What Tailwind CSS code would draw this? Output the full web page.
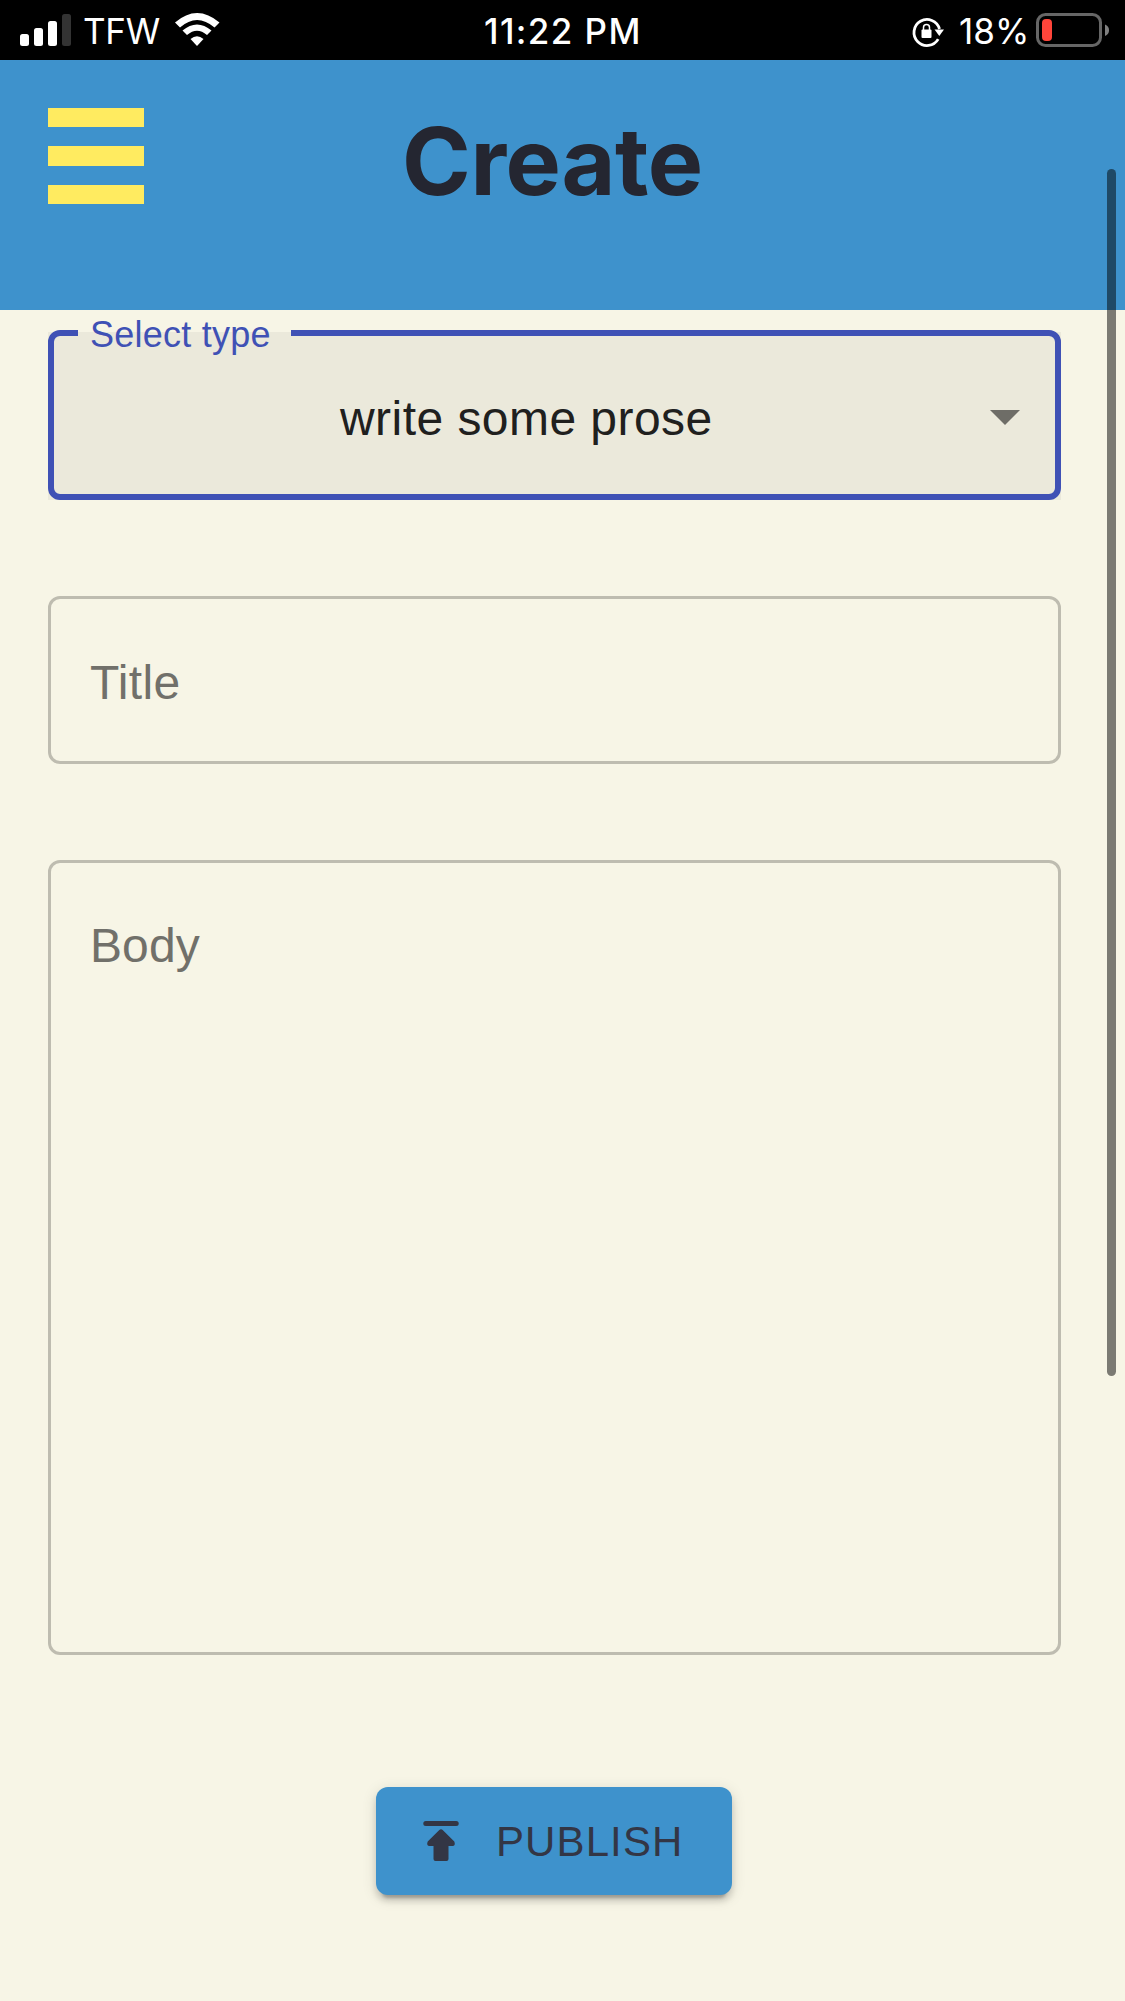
<!DOCTYPE html>
<html lang="en">
<head>
<meta charset="utf-8">
<title>Create</title>
<script src="https://cdn.jsdelivr.net/npm/@tailwindcss/browser@4"></script>
</head>
<body class="relative h-[2001px] w-[1125px] overflow-hidden bg-[#f7f5e6] font-['Liberation_Sans',Arial,sans-serif]">
  <!-- Status bar -->
  <div class="grid h-[60px] grid-cols-3 items-center bg-black font-['Inter',sans-serif] text-[35px] leading-none whitespace-nowrap text-white">
    <div class="flex h-[60px] items-center pl-5">
      <svg class="h-[60px] w-[51px] shrink-0" viewBox="20 0 51 60" fill="#fff">
        <rect x="20" y="34" width="9" height="12" rx="2.5"/><rect x="34" y="28" width="9" height="18" rx="2.5"/><rect x="48" y="21" width="9" height="25" rx="2.5"/><rect x="62" y="14" width="9" height="32" rx="2.5" fill="#333"/>
      </svg>
      <span class="ml-[12px] w-[91px] pt-[3px] font-normal tracking-[-0.3px]">TFW</span>
      <svg class="h-[60px] w-[46px] shrink-0" viewBox="174 0 46 60" fill="#fff">
        <path d="M175 22.5Q197 3.500 219.500 22.500L214.500 27.500Q197 12.500 180 27.500Z"/>
        <path d="M182.500 30.500Q197 18.500 211.500 30.500L207 35Q197 26.500 187 35Z"/>
        <path d="M190.500 39Q197 33.500 203.500 39L197 46Z"/>
      </svg>
    </div>
    <div class="pt-[3px] pl-[109px] font-medium tracking-[1.4px]">11:22 PM</div>
    <div class="flex h-[60px] items-center pl-[160px]">
      <svg class="h-[60px] w-[36px] shrink-0" viewBox="910 0 36 60">
        <path d="M938.200 39.100A13 13 0 1 1 939.500 29" fill="none" stroke="#fff" stroke-width="2.800"/>
        <path d="M934.500 29.500H944L939.300 36Z" fill="#fff"/>
        <rect x="921.500" y="29.500" width="10" height="8.500" rx="1" fill="#fff"/>
        <path d="M923.500 30V27.500a3 3 0 0 1 6 0V30" fill="none" stroke="#fff" stroke-width="1.500"/>
      </svg>
      <span class="ml-[13px] w-[76px] pt-[3px] font-normal tracking-[0px]">18%</span>
      <svg class="h-[60px] w-[75px] shrink-0" viewBox="1035 0 75 60">
        <rect x="1037.500" y="14.500" width="63" height="31" rx="8" fill="none" stroke="#666" stroke-width="3"/>
        <rect x="1042" y="19" width="10" height="22" rx="4" fill="#ff453a"/>
        <path d="M1105 24.500Q1109 26 1109 30.300Q1109 34.500 1105 36Z" fill="#808080"/>
      </svg>
    </div>
  </div>

  <!-- App header -->
  <header class="flex h-[250px] items-start bg-[#3e92cc] pl-12">
    <button class="mt-12 flex h-24 w-24 flex-col justify-between" aria-label="Menu">
      <span class="h-[19px] w-full bg-[#ffeb60]"></span><span class="h-5 w-full bg-[#ffeb60]"></span><span class="h-[19px] w-full bg-[#ffeb60]"></span>
    </button>
    <h1 class="mt-[43px] ml-[258px] font-['Inter',sans-serif] text-[93px] leading-[116px] font-bold tracking-[-0.4px] whitespace-nowrap text-[#242631]">Create</h1>
  </header>

  <!-- Form -->
  <main class="flex flex-col pl-12">
    <div class="relative mt-[22px] flex h-[168px] w-[1013px] items-center bg-[#ebe9db]">
      <fieldset class="absolute inset-x-0 -top-[2px] h-[170px] rounded-[12px] border-[6px] border-[#3f51b5]"></fieldset>
      <span class="absolute -top-[2px] left-[30px] h-[2px] w-[213px] bg-[#f7f5e6]"></span>
      <span class="absolute top-0 left-[30px] h-[4px] w-[213px] bg-[#ebe9db]"></span>
      <label class="absolute -top-[18px] left-[42px] text-[36px] leading-[42px] tracking-[0.25px] whitespace-nowrap text-[#3f51b5]">Select type</label>
      <span class="ml-[292px] w-[650px] pt-[5px] text-[48px] leading-[56px] tracking-[0.45px] whitespace-nowrap text-[#20201e]">write some prose</span>
      <svg class="mt-[2px] h-[15px] w-[30px] shrink-0" viewBox="0 0 30 15"><path d="M0 0H30L15 15Z" fill="#6e6d67"/></svg>
    </div>
    <div class="mt-24 flex h-[168px] w-[1013px] items-center rounded-[12px] border-[3px] border-[#bebcb0] pt-[5px] pl-[39px] text-[48px] leading-[56px] tracking-[0.3px] text-[#71706a]">Title</div>
    <div class="mt-24 h-[795px] w-[1013px] rounded-[12px] border-[3px] border-[#bebcb0] pt-[55px] pl-[39px] text-[48px] leading-[56px] tracking-[0.1px] text-[#71706a]">Body</div>
    <button class="mt-[132px] ml-[328px] flex h-[108px] w-[356px] items-center rounded-[12px] bg-[#3e92cc] pl-[47px] text-[42px] leading-[50px] tracking-[1.1px] text-[#333645] shadow-[0_9px_3px_-6px_rgba(0,0,0,0.2),0_6px_6px_0_rgba(0,0,0,0.14),0_3px_15px_0_rgba(0,0,0,0.12)]">
      <svg class="h-[42px] w-9 shrink-0" viewBox="0 0 36 42" fill="#333645">
        <rect x="0.300" y="1" width="35.400" height="5" rx="2.500"/>
        <path d="M16.300 10Q18 8.500 19.700 10L31.300 21.600Q32.800 25.500 30 26H25.500V39Q25.500 41 23.500 41H12.500Q10.500 41 10.500 39V26H6Q3.200 25.500 4.700 21.600Z"/>
      </svg>
      <span class="ml-[37px] pt-[2px]">PUBLISH</span>
    </button>
  </main>

  <!-- Overlay scrollbar thumb -->
  <div class="absolute top-[169px] left-[1107px] h-[1207px] w-[9px] rounded-full bg-black/50"></div>
</body>
</html>
